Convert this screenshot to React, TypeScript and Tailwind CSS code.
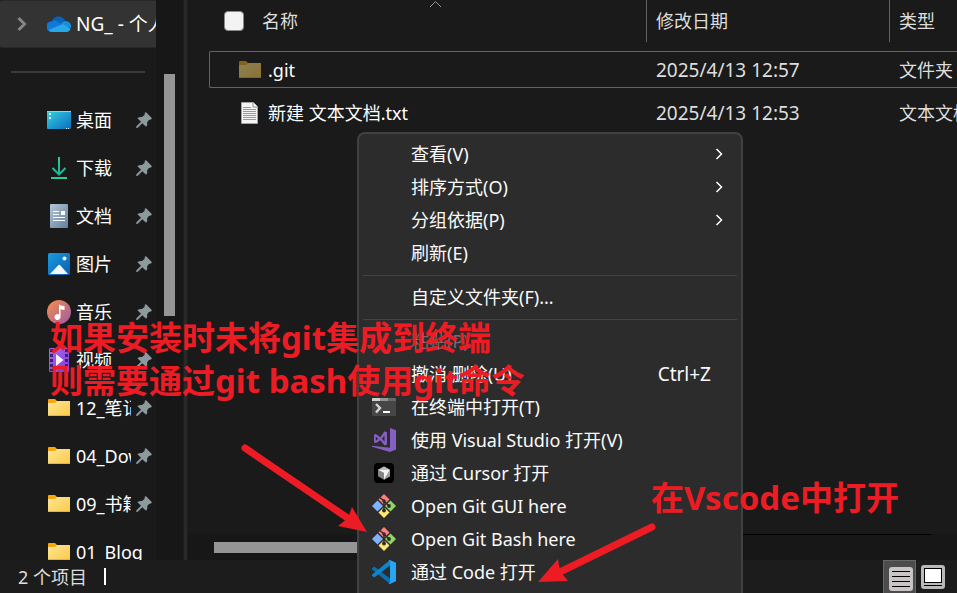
import React from "react";

const font = "font-['Noto_Sans','Noto_Sans_CJK_SC',sans-serif]";

function CloudIcon() {
  return (
    <svg width="24" height="24" viewBox="0 0 24 24">
      <path d="M5 9a7 7 0 0 1 13.200.2L19 14H6z" fill="#0a63b8" />
      <path d="M4.600 9.200C6.400 8.200 8.600 8.500 10.200 9.600L17 13.800 8 20H4.800A5.200 5.200 0 0 1 4.600 9.200Z" fill="#1078d6" />
      <path d="M17.500 9.200a5.200 5.200 0 0 1 6.300 6.600L17 14l-3-2c.8-1.500 2-2.500 3.500-2.800Z" fill="#1490df" />
      <path d="M1.500 18 15.500 12l8 4.500A4.500 4.500 0 0 1 19.500 20H5.200a5 5 0 0 1-3.700-2Z" fill="#28a8ea" />
    </svg>
  );
}

function DesktopIcon() {
  return (
    <svg width="24" height="24" viewBox="0 0 24 24">
      <defs>
        <linearGradient id="desk" x1="0" y1="0" x2="1" y2="1">
          <stop stopColor="#35d1e4" />
          <stop offset="1" stopColor="#0b6cbd" />
        </linearGradient>
      </defs>
      <rect y="3" width="24" height="18" rx="1" fill="url(#desk)" />
      <path d="M0 3.500h24" stroke="#6be4ef" />
      <path d="M2 5h2v2H2zM2 9h2v2H2zM19 20h1v1h-1zM21 20h1v1h-1z" fill="#fff" />
    </svg>
  );
}

function DownloadIcon() {
  return (
    <svg width="24" height="24" viewBox="0 0 24 24" fill="none" strokeWidth="2">
      <defs>
        <linearGradient id="down" x1="0" y1="1" x2="0" y2="23" gradientUnits="userSpaceOnUse">
          <stop stopColor="#35c997" />
          <stop offset="1" stopColor="#16b096" />
        </linearGradient>
      </defs>
      <path d="M12.010 1 12 18M5.500 12l6.500 6.500 6.500-6.500" stroke="url(#down)" />
      <path d="M4 22h16" stroke="#2fc998" />
    </svg>
  );
}

function DocumentIcon() {
  return (
    <svg width="24" height="24" viewBox="0 0 24 24">
      <defs>
        <linearGradient id="doc" x1="0" y1="0" x2="1" y2="1">
          <stop stopColor="#b3c6d8" />
          <stop offset="1" stopColor="#64809c" />
        </linearGradient>
      </defs>
      <rect x="3" width="18" height="24" rx="1" fill="url(#doc)" />
      <path d="M6 7.500h6M6 10.500h6M6 13.500h12M6 16.500h12" stroke="#fff" />
      <path d="M14 7h4v4h-4z" fill="#fff" />
    </svg>
  );
}

function PictureIcon() {
  return (
    <svg width="24" height="24" viewBox="0 0 24 24">
      <defs>
        <linearGradient id="pic" x1="0" y1="0" x2="1" y2="1">
          <stop stopColor="#1b9ae0" />
          <stop offset="1" stopColor="#0a5fb2" />
        </linearGradient>
      </defs>
      <rect x="1" y="1" width="22" height="22" rx="1.500" fill="url(#pic)" />
      <path d="m3 22 8.500-9q.7-.6 1.400 0L21 22Z" fill="#f3f8fd" />
      <circle cx="17.500" cy="6.500" r="2" fill="#f3f8fd" />
    </svg>
  );
}

function MusicIcon() {
  return (
    <svg width="24" height="24" viewBox="0 0 24 24">
      <defs>
        <linearGradient id="mus" x1="0" y1="0" x2="1" y2="1">
          <stop offset=".1" stopColor="#f08a50" />
          <stop offset=".9" stopColor="#a45f9f" />
        </linearGradient>
      </defs>
      <circle cx="12" cy="12" r="12" fill="url(#mus)" />
      <path d="M12 4.500q2.500 1.500 5.500 1.500v4q-2.500 0-4-1v8a3 3 0 1 1-1.500-2.600Z" fill="#fff" />
    </svg>
  );
}

function VideoIcon() {
  return (
    <svg width="24" height="24" viewBox="0 0 24 24">
      <defs>
        <linearGradient id="vid" x1="0" y1="0" x2="1" y2="1">
          <stop stopColor="#a868ee" />
          <stop offset="1" stopColor="#7d3fd4" />
        </linearGradient>
      </defs>
      <rect x="2" width="20" height="24" rx="1.500" fill="url(#vid)" />
      <path d="M4.500 1v22M19.500 1v22" stroke="#3f1d78" strokeWidth="3" strokeDasharray="3 2" />
      <path d="m9 6 7.500 6L9 18Z" fill="#f4effa" />
    </svg>
  );
}

function FolderIcon() {
  return (
    <svg width="24" height="24" viewBox="0 0 24 24">
      <defs>
        <linearGradient id="fold" x1="0" y1="0" x2="1" y2="1">
          <stop stopColor="#ffe69a" />
          <stop offset="1" stopColor="#fbc945" />
        </linearGradient>
      </defs>
      <path d="M1 4q0-1 1-1h6l2 2v3H1Z" fill="#f5a90f" />
      <path d="M1 7h7l2-2h13v15H1Z" fill="url(#fold)" />
      <path d="M1 19.500h22" stroke="#eeb22c" />
    </svg>
  );
}

function PinIcon() {
  return (
    <svg width="16" height="16" viewBox="0 0 16 16" fill="#8d989f" aria-hidden="true">
      <path d="M9.800 0 16 6.200Q14.800 8.200 12.900 8L11.200 10.200q.6 2.700-1.200 4.600L6.300 11.200 1.800 15.800.2 16 .4 14.300 5 9.800 1.400 6.200Q3.500 4.500 6 5L8.500 3Q8.200 1.200 9.800 0Z" />
    </svg>
  );
}

function TextFileIcon() {
  return (
    <svg width="24" height="24" viewBox="0 0 24 24">
      <path d="M3.500 1.500h12l4 4v17h-16Z" fill="#f5f5f5" stroke="#a3a3a3" />
      <path d="M15 1.500v4.500h4.500" fill="#fff" stroke="#8d8d8d" />
      <path d="M5 6.500h8M5 8.500h13M5 10.500h13M5 12.500h13M5 14.500h13M5 16.500h13M5 18.500h13" stroke="#9a9a9a" />
    </svg>
  );
}

function TerminalIcon() {
  return (
    <svg width="24" height="24" viewBox="0 0 24 24">
      <rect y="3" width="24" height="18" rx="1" fill="#464646" />
      <path d="M0 6V4q0-1 1-1h7v3Z" fill="#d0d0d0" />
      <path d="M8 3h8v3H8z" fill="#959595" />
      <path d="M16 3h7q1 0 1 1v2h-8z" fill="#696969" />
      <path d="m4 9 4 4-4 4.500" fill="none" stroke="#d6d6d6" strokeWidth="2.400" />
      <path d="M11 16h7v2h-7z" fill="#fff" />
    </svg>
  );
}

function VisualStudioIcon() {
  return (
    <svg width="24" height="24" viewBox="0 0 24 24" fill="#865fc5">
      <path d="m18 0 6 2.200v19.200L18 24 0 18.700v-1l18 2Z" />
      <path
        fillRule="evenodd"
        d="M2 6.800 3.800 6l4.500 3.300L12.500 3.200 15 4.300v12.300l-2.500 1L8.300 12.200 3.800 15.200 2 14.300ZM3.800 8.700v4l2.500-2ZM12.500 7.500l-2.500 3.200 2.500 3.100Z"
      />
    </svg>
  );
}

function CursorIcon() {
  return (
    <svg width="24" height="24" viewBox="0 0 24 24">
      <rect x="2" y="2" width="20" height="20" rx="4" fill="#000" />
      <path d="m12 5.500 6 3.200v6.600l-6 3.400-6-3.400V8.700Z" fill="#858585" />
      <path d="m12 5.500 6 3.200H6Z" fill="#bdbdbd" />
      <path d="M6 8.700h12l-6 10v-7Z" fill="#f5f5f5" />
      <path d="M18 8.700v6.600l-6 3.400Z" fill="#a0a0a0" />
    </svg>
  );
}

function GitIcon() {
  return (
    <svg width="24" height="24" viewBox="0 0 24 24">
      <path d="m12 0 5.500 5.500L12 11 6.500 5.500Z" fill="#ff7f7f" />
      <path d="m18.500 6.500 5.500 5.500-5.500 5.500L13 12Z" fill="#8fd663" />
      <path d="m5.500 6.500L11 12l-5.500 5.500L0 12Z" fill="#80b3ff" />
      <path d="m12 13 5.500 5.500L12 24l-5.500-5.500Z" fill="#ffe573" />
      <path d="m8 3.500 4 3.500v9M12.500 7.500l4 4" stroke="#2f2a2a" strokeWidth="1.500" fill="none" />
      <circle cx="12" cy="7" r="1.700" fill="#2f2a2a" />
      <circle cx="17" cy="12" r="1.900" fill="#2f2a2a" />
      <circle cx="12" cy="16.500" r="1.900" fill="#2f2a2a" />
    </svg>
  );
}

function VsCodeIcon() {
  return (
    <svg width="24" height="24" viewBox="0 0 24 24">
      <path d="M0 8.600 1.600 7.100q.6-.5 1.300 0L18 18.500V24L.2 9.500Q-.3 9 0 8.600Z" fill="#0a6fb3" />
      <path d="M0 15.400l1.600 1.500q.6.500 1.300 0L18 5.500V0L.2 14.500q-.5.500-.2.900Z" fill="#0b87d0" />
      <path d="M17.800.1 24 2.800v18.400l-6.200 2.700q-.8.200-1.300-.4l1.500-.7V1.200L16.500.5q.5-.6 1.300-.4Z" fill="#27a5f2" />
    </svg>
  );
}

type Place = { label: string; icon: React.ReactNode; pinned: boolean };

const places: Place[] = [
  { label: "桌面", icon: <DesktopIcon />, pinned: true },
  { label: "下载", icon: <DownloadIcon />, pinned: true },
  { label: "文档", icon: <DocumentIcon />, pinned: true },
  { label: "图片", icon: <PictureIcon />, pinned: true },
  { label: "音乐", icon: <MusicIcon />, pinned: true },
  { label: "视频", icon: <VideoIcon />, pinned: true },
  { label: "12_笔记", icon: <FolderIcon />, pinned: true },
  { label: "04_Download", icon: <FolderIcon />, pinned: true },
  { label: "09_书籍", icon: <FolderIcon />, pinned: true },
  { label: "01_Blog", icon: <FolderIcon />, pinned: false },
];

function Sidebar() {
  return (
    <nav className="flex w-[188px] shrink-0 overflow-hidden">
      <div className="w-[156px] shrink-0">
        <button className="flex h-12 w-full items-center overflow-hidden rounded-l-xs border-y border-[#282828] bg-[#333] pl-4 text-left text-[19px] whitespace-nowrap">
          <svg width="12" height="14" viewBox="0 0 12 14" fill="none" stroke="#858585" strokeWidth="3" className="shrink-0">
            <path d="m2.500 1 6 6-6 6" />
          </svg>
          <span className="ml-[19px] shrink-0">
            <CloudIcon />
          </span>
          <span className="ml-[5px]">NG_ - 个人</span>
        </button>
        <div className="flex h-12 items-center px-[11px]">
          <div className="h-0.5 w-full bg-[#3a3a3a]" />
        </div>
        <ul>
          {places.map((p) => (
            <li key={p.label}>
              <button className="flex h-12 w-full items-center gap-[5px] pr-1 pl-[47px] text-left whitespace-nowrap">
                <span className="shrink-0">{p.icon}</span>
                <span className="min-w-0 flex-1 overflow-hidden">{p.label}</span>
                {p.pinned && (
                  <span className="shrink-0">
                    <PinIcon />
                  </span>
                )}
              </button>
            </li>
          ))}
        </ul>
      </div>
      <div className="flex-1 bg-[#171717] pt-[74px] pl-2">
        <div className="h-[242px] w-[11px] bg-[#959595]" />
      </div>
      <div className="w-[5px] border-x border-[#1e1e1e] bg-[#292929]" />
    </nav>
  );
}

const files = [
  { name: ".git", date: "2025/4/13 12:57", type: "文件夹", focused: true },
  { name: "新建 文本文档.txt", date: "2025/4/13 12:53", type: "文本文档", focused: false },
];

function FileList() {
  return (
    <section className="relative flex min-w-0 flex-1 flex-col overflow-hidden">
      <svg className="absolute top-0 left-[241px]" width="13" height="8" viewBox="0 0 13 8" fill="none" stroke="#9a9a9a">
        <path d="M1 7 6.500 1.500 12 7" />
      </svg>
      <div className="flex-1 overflow-hidden pl-[21px]">
        <table className="-mt-1.5 w-[calc(100%+24px)] table-fixed border-separate border-spacing-x-0 border-spacing-y-1.5 text-left whitespace-nowrap text-[#dedede]">
          <colgroup>
            <col className="w-[438px]" />
            <col className="w-[243px]" />
            <col />
          </colgroup>
          <thead>
            <tr className="h-[45px] align-top">
              <th className="p-0 font-normal">
                <div className="flex h-[42px] items-center gap-[18px] border-r border-[#636363] pl-[15px]">
                  <input
                    type="checkbox"
                    aria-label="全选"
                    className="size-5 appearance-none rounded-[4px] border border-[#8a8a8a] bg-[#f3f3f3]"
                  />
                  名称
                </div>
              </th>
              <th className="p-0 font-normal">
                <div className="flex h-[42px] items-center border-r border-[#636363] pl-[9px]">修改日期</div>
              </th>
              <th className="p-0 font-normal">
                <div className="flex h-[42px] items-center pl-[9px]">类型</div>
              </th>
            </tr>
          </thead>
          <tbody>
            {files.map((f) => {
              const edge = f.focused ? "border-[#636363]" : "border-transparent";
              return (
                <tr key={f.name} className="h-[37px]">
                  <td className={`rounded-l-xs border-y border-l p-0 ${edge}`}>
                    <div className="flex items-center gap-1.5 pl-7 text-white">
                      {f.focused ? (
                        <span className="opacity-50">
                          <FolderIcon />
                        </span>
                      ) : (
                        <TextFileIcon />
                      )}
                      {f.name}
                    </div>
                  </td>
                  <td className={`border-y py-0 pr-0 pl-[9px] text-[19px] ${edge}`}>{f.date}</td>
                  <td className={`border-y py-0 pr-0 pl-[9px] ${edge}`}>{f.type}</td>
                </tr>
              );
            })}
          </tbody>
        </table>
      </div>
      <div className="flex h-[26px] items-center bg-[#171717] pr-[26px] pl-[26px]">
        <div className="h-[11px] w-[400px] bg-[#959595]" />
        <div className="h-px flex-1 self-start bg-black" />
      </div>
    </section>
  );
}

type Entry = { label: string; icon?: React.ReactNode; submenu?: boolean; shortcut?: string; disabled?: boolean };

const groups: Entry[][] = [
  [
    { label: "查看(V)", submenu: true },
    { label: "排序方式(O)", submenu: true },
    { label: "分组依据(P)", submenu: true },
    { label: "刷新(E)" },
  ],
  [{ label: "自定义文件夹(F)..." }],
  [
    { label: "粘贴(P)", disabled: true },
    { label: "撤消 删除(U)", shortcut: "Ctrl+Z" },
    { label: "在终端中打开(T)", icon: <TerminalIcon /> },
    { label: "使用 Visual Studio 打开(V)", icon: <VisualStudioIcon /> },
    { label: "通过 Cursor 打开", icon: <CursorIcon /> },
    { label: "Open Git GUI here", icon: <GitIcon /> },
    { label: "Open Git Bash here", icon: <GitIcon /> },
    { label: "通过 Code 打开", icon: <VsCodeIcon /> },
  ],
];

function ContextMenu() {
  return (
    <div
      role="menu"
      className="absolute top-[132px] left-[357px] w-[386px] rounded-lg border-2 border-[#414141] bg-[#2c2c2c] px-1 pt-[3px] pb-4 text-[#fafafa]"
    >
      {groups.map((g, i) => (
        <div key={i} role="group" className={i > 0 ? "mt-1.5 border-t border-[#434343] pt-1" : ""}>
          {g.map((e) => (
            <button
              key={e.label}
              role="menuitem"
              disabled={e.disabled}
              className="flex h-[33px] w-full items-center pr-3.5 pl-[9px] text-left whitespace-nowrap disabled:text-[#6f6f6f]"
            >
              <span className="mr-[15px] w-6 shrink-0">{e.icon}</span>
              <span className="flex-1">{e.label}</span>
              {e.shortcut && <span className="mr-3 text-[19px]">{e.shortcut}</span>}
              {e.submenu && (
                <svg width="8" height="12" viewBox="0 0 8 12" fill="none" stroke="#fff" strokeWidth="1.500">
                  <path d="m1.500 1 5 5-5 5" />
                </svg>
              )}
            </button>
          ))}
        </div>
      ))}
    </div>
  );
}

function StatusBar() {
  return (
    <footer className="flex h-[33px] shrink-0 items-center bg-[#1c1c1c] pl-[18px] text-[#dedede]">
      <span>2 个项目</span>
      <span className="ml-[17px] h-[17px] w-0.5 bg-white" />
      <button aria-label="详细信息" className="ml-auto flex h-full w-[33px] items-end justify-center border border-b-0 border-[#666] bg-[#4c4c4c] pb-0.5 pl-0.5">
        <svg width="24" height="24" viewBox="0 0 24 24">
          <rect width="24" height="24" rx="3" fill="#c9c5c7" />
          <path d="M3 4.500h18M3 9.500h18M3 14.500h18M3 19.500h18" stroke="#000" />
        </svg>
      </button>
      <button aria-label="大图标" className="mr-3 ml-[5px]">
        <svg width="24" height="24" viewBox="0 0 24 24">
          <rect width="24" height="24" rx="3" fill="#bab9b9" />
          <rect x="3.500" y="3.500" width="17" height="14" fill="#fff" stroke="#000" />
          <path d="M3 20.500h18" stroke="#000" />
        </svg>
      </button>
    </footer>
  );
}

function Annotations() {
  return (
    <div className="pointer-events-none absolute inset-0 text-[33px] leading-[43px] font-bold whitespace-nowrap text-[#ed1c24]">
      <p className="absolute top-[316px] left-[50px]">
        如果安装时未将git集成到终端
        <br />
        则需要通过git bash使用git命令
      </p>
      <p className="absolute top-[476px] left-[651px]">在Vscode中打开</p>
      <svg className="absolute top-0 left-0" width="957" height="593" viewBox="0 0 957 593" fill="#ed1c24">
        <path d="M245 448 352 521M652 527 560 572" stroke="#ed1c24" strokeWidth="7" strokeLinecap="round" />
        <path d="M367 532 352 507 348 518 338 526ZM538 582 558 559 560 571 568 581Z" />
      </svg>
    </div>
  );
}

export default function App() {
  return (
    <div className={`relative flex h-screen flex-col overflow-hidden bg-[#1a1a1a] text-[18px] leading-6 text-white ${font}`}>
      <main className="flex min-h-0 flex-1">
        <Sidebar />
        <FileList />
      </main>
      <StatusBar />
      <ContextMenu />
      <Annotations />
    </div>
  );
}
